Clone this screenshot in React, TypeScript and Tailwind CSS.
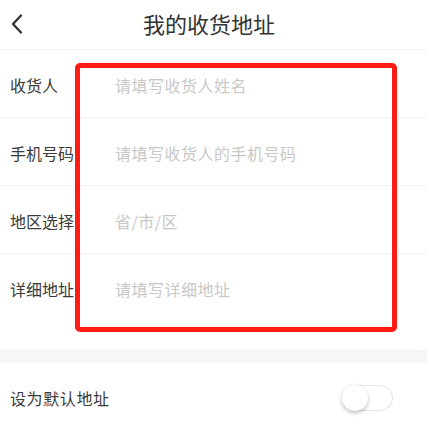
import React from "react";

const fields = [
  { label: "收货人", placeholder: "请填写收货人姓名" },
  { label: "手机号码", placeholder: "请填写收货人的手机号码" },
  { label: "地区选择", placeholder: "省/市/区" },
  { label: "详细地址", placeholder: "请填写详细地址" },
];

function BackIcon() {
  return (
    <svg width="14" height="22" viewBox="0 0 14 22" fill="none">
      <path d="M11 2.5 L3 11 L11 19.5" stroke="#333" strokeWidth="2.4" strokeLinecap="round" strokeLinejoin="round" />
    </svg>
  );
}

export default function App() {
  return (
    <div
      className="relative w-[430px] h-[427px] overflow-hidden bg-white text-[#333]"
      style={{ fontFamily: '"Noto Sans CJK SC", "Noto Sans", sans-serif' }}
    >
      <div className="w-[427px]">
        {/* top bar */}
        <div className="relative flex h-[50px] items-center justify-center border-b border-[#f3f3f3] pb-[4px]">
          <div className="absolute left-[10px] top-[13px]">
            <BackIcon />
          </div>
          <h1 className="mr-[9px] text-[22px] leading-none text-[#333]">我的收货地址</h1>
        </div>

        {/* form rows */}
        <div>
          {fields.map((f, i) => (
            <div
              key={f.label}
              className={`flex h-[68px] items-center pl-[10px] pt-[2px] ${i < fields.length - 1 ? "border-b border-[#f2f2f2]" : ""}`}
            >
              <span className="w-[105px] shrink-0 text-[16px] leading-none text-[#3a3a3a]">{f.label}</span>
              <span className="text-[16px] leading-none tracking-[0.5px] text-[#c8c8c8]">{f.placeholder}</span>
            </div>
          ))}
        </div>

        <div className="h-[28px]" />
        <div className="h-[13px] bg-[#f7f5f5]" />

        {/* default address switch */}
        <div className="flex h-[70px] items-center justify-between pl-[10px] pr-[34px]">
          <span className="text-[16px] leading-none tracking-[0.6px] text-[#3a3a3a]">设为默认地址</span>
          <div className="relative h-[26px] w-[51px] rounded-full border border-[#e3e3e3] bg-white">
            <div className="absolute left-[-1px] top-[-1px] h-[26px] w-[26px] rounded-full bg-white shadow-[0_2px_4px_rgba(0,0,0,0.25)]" />
          </div>
        </div>
      </div>

      {/* highlight frame over the input column */}
      <div className="pointer-events-none absolute left-[75px] top-[63px] h-[269px] w-[322px] rounded-[5px] border-[5px] border-[#ff1c14]" />
    </div>
  );
}
